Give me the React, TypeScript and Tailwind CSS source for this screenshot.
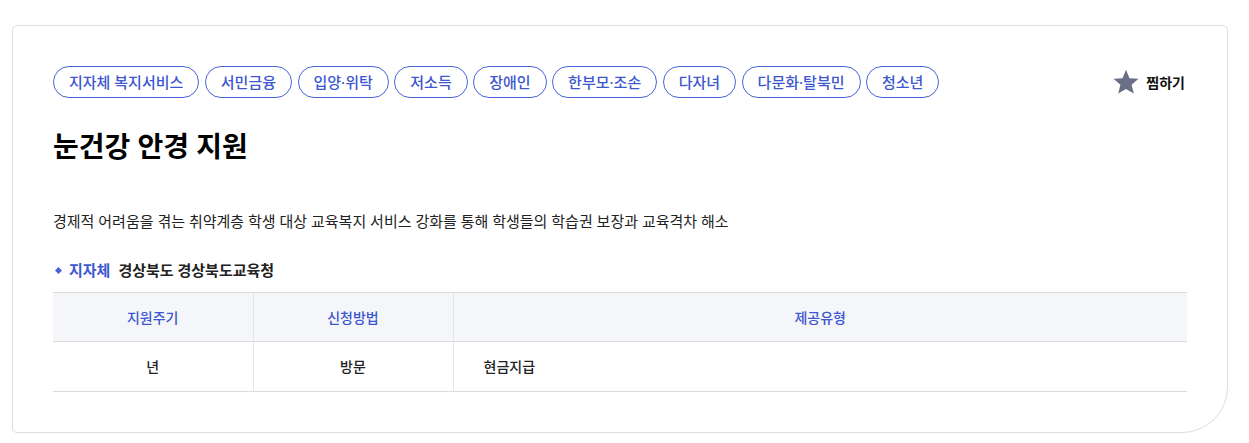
import React from 'react';

const tags = [
  '지자체 복지서비스',
  '서민금융',
  '입양·위탁',
  '저소득',
  '장애인',
  '한부모·조손',
  '다자녀',
  '다문화·탈북민',
  '청소년',
];

const StarIcon = () => (
  <svg width="28" height="28" viewBox="0 0 24 24" aria-hidden="true">
    <path
      d="M12 1.5l3 7.2 7.7.6-5.9 5 1.9 7.6L12 17.9l-6.7 4 1.9-7.6-5.9-5 7.7-.6z"
      fill="#6b6f86"
    />
  </svg>
);

const App = () => {
  return (
    <div
      className="w-[1249px] h-[443px] bg-white pt-[25px] pl-[12px]"
      style={{ fontFamily: '"Noto Sans", "Noto Sans CJK KR", sans-serif' }}
    >
      <div className="w-[1216px] h-[408px] border border-[#dddddd] rounded-[5px] rounded-br-[46px] px-[40px] pt-[40px]">
        <div className="flex items-start justify-between">
          <ul className="flex gap-[5.5px]">
            {tags.map((tag) => (
              <li
                key={tag}
                className="h-[32px] px-[15px] flex items-center rounded-full border border-[#4a63d8] text-[15px] font-medium text-[#3d57cf] leading-none"
              >
                {tag}
              </li>
            ))}
          </ul>
          <button className="flex items-center gap-[6px] h-[32px] mr-[2px] text-[14px] font-bold text-[#111]">
            <StarIcon />
            찜하기
          </button>
        </div>

        <h1 className="mt-[29px] text-[28px] leading-[38px] font-bold text-black">
          눈건강 안경 지원
        </h1>

        <p className="mt-[46px] text-[15px] leading-[20px] text-[#222]">
          경제적 어려움을 겪는 취약계층 학생 대상 교육복지 서비스 강화를 통해 학생들의 학습권 보장과 교육격차 해소
        </p>

        <div className="mt-[29px] flex items-center text-[15px] leading-[20px]">
          <span className="ml-[3px] w-[5px] h-[5px] bg-[#4a63d8] rotate-45" />
          <span className="ml-[8px] font-bold text-[#3d57cf]">지자체</span>
          <span className="ml-[8px] font-bold text-[#222]">경상북도 경상북도교육청</span>
        </div>

        <table className="mt-[12px] w-full border-collapse text-[14px]">
          <thead>
            <tr className="bg-[#f5f6fa] border-t border-b border-[#dcdcdc] h-[49px]">
              <th className="w-[200px] font-medium text-[#3d57cf] border-r border-[#e6e6e6]">지원주기</th>
              <th className="w-[200px] font-medium text-[#3d57cf] border-r border-[#e6e6e6]">신청방법</th>
              <th className="font-medium text-[#3d57cf]">제공유형</th>
            </tr>
          </thead>
          <tbody>
            <tr className="border-b border-[#dcdcdc] h-[50px]">
              <td className="text-center font-medium text-[#222] border-r border-[#e6e6e6]">년</td>
              <td className="text-center font-medium text-[#222] border-r border-[#e6e6e6]">방문</td>
              <td className="pl-[30px] font-medium text-[#222]">현금지급</td>
            </tr>
          </tbody>
        </table>
      </div>
    </div>
  );
};

export default App;
